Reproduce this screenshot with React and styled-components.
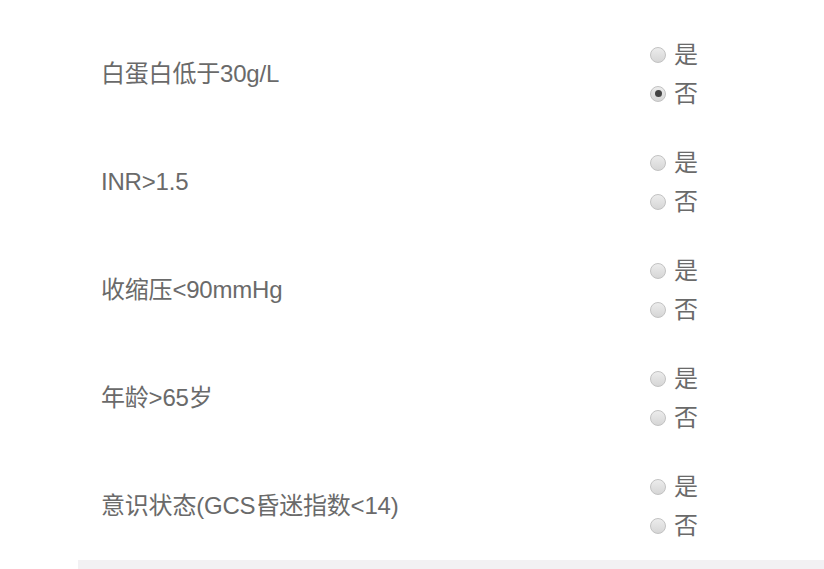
import React, { useState } from 'react';
import styled, { createGlobalStyle } from 'styled-components';

const GlobalStyle = createGlobalStyle`
    html, body {
        margin: 0;
        padding: 0;
        background: #fff;
        overflow: hidden;
    }
    body {
        font-family: Arial, "Liberation Sans", "Noto Sans CJK SC", sans-serif;
    }
`;

const questions = [
    { id: 'alb', label: '白蛋白低于30g/L', value: 'no' },
    { id: 'inr', label: 'INR>1.5', value: null },
    { id: 'sbp', label: '收缩压<90mmHg', value: null },
    { id: 'age', label: '年龄>65岁', value: null },
    { id: 'gcs', label: '意识状态(GCS昏迷指数<14)', value: null },
];

const Page = () => {
    const [answers, setAnswers] = useState(
        Object.fromEntries(questions.map((q) => [q.id, q.value]))
    );

    return (
        <Wrapper>
            <GlobalStyle />
            <Form>
                {questions.map((q) => (
                    <Row key={q.id}>
                        <Label>{q.label}</Label>
                        <Options>
                            {[['yes', '是'], ['no', '否']].map(([val, text]) => (
                                <Option key={val}>
                                    <input
                                        type="radio"
                                        name={q.id}
                                        checked={answers[q.id] === val}
                                        onChange={() => setAnswers({ ...answers, [q.id]: val })}
                                    />
                                    <Dot checked={answers[q.id] === val} />
                                    <span>{text}</span>
                                </Option>
                            ))}
                        </Options>
                    </Row>
                ))}
            </Form>
            <Footer />
        </Wrapper>
    );
};

const Wrapper = styled.div`
    width: 824px;
    height: 569px;
    padding-top: 20px;
    box-sizing: border-box;
`;

const Form = styled.div`
    margin-left: 78px;
`;

const Row = styled.div`
    display: flex;
    align-items: center;
    height: 108px;
`;

const Label = styled.div`
    width: 549px;
    padding-left: 23px;
    font-size: 24px;
    color: #6a6a6a;
    line-height: 1;
    letter-spacing: -0.2px;
`;

const Options = styled.div`
    display: flex;
    flex-direction: column;
`;

const Option = styled.label`
    display: flex;
    align-items: center;
    height: 39px;
    font-size: 24px;
    color: #6a6a6a;
    cursor: pointer;
    input {
        position: absolute;
        opacity: 0;
        width: 0;
        height: 0;
    }
    span {
        margin-left: 8px;
        line-height: 1;
    }
`;

const Dot = styled.i`
    position: relative;
    width: 16px;
    height: 16px;
    box-sizing: border-box;
    border-radius: 50%;
    border: 1px solid #c2c2c2;
    background: linear-gradient(#ececec, #d6d6d6);
    &::after {
        content: '';
        display: ${(p) => (p.checked ? 'block' : 'none')};
        position: absolute;
        left: 3.5px;
        top: 3.5px;
        width: 7px;
        height: 7px;
        border-radius: 50%;
        background: #444;
    }
`;

const Footer = styled.div`
    margin-left: 78px;
    height: 10px;
    background: #f2f1f3;
`;

export default Page;
